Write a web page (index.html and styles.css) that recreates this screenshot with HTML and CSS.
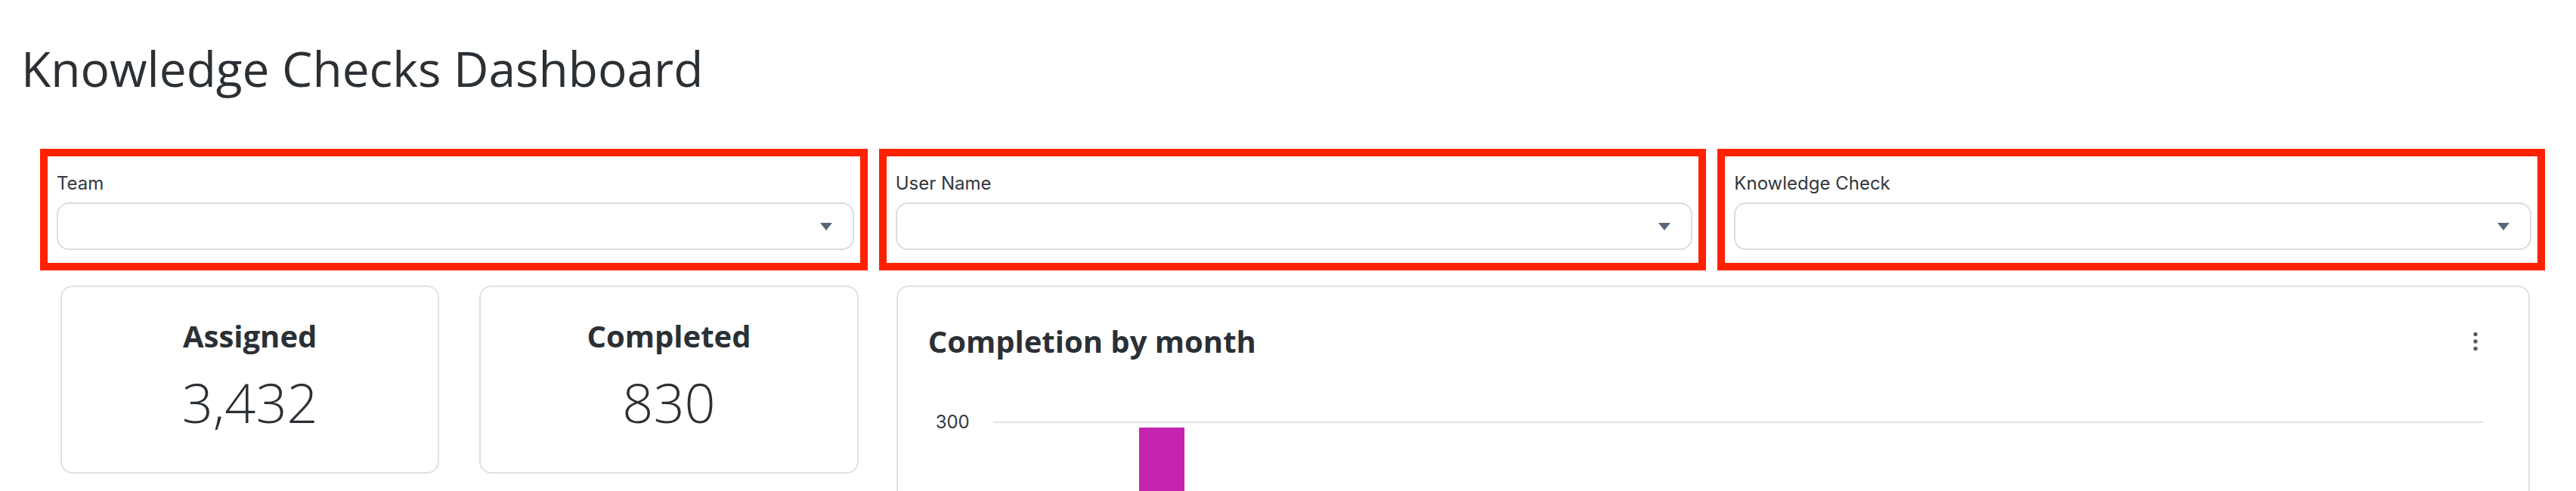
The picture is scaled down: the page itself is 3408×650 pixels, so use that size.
FILE: index.html
```html
<!DOCTYPE html>
<html lang="en">
<head>
<meta charset="utf-8">
<title>Knowledge Checks Dashboard</title>
<link rel="stylesheet" href="styles.css">
</head>
<body>
<main class="page">
  <h1 class="page-title">Knowledge Checks Dashboard</h1>

  <section class="filters">
    <div class="filter">
      <label class="filter-label">Team</label>
      <div class="select"><span class="caret"></span></div>
    </div>
    <div class="filter">
      <label class="filter-label">User Name</label>
      <div class="select"><span class="caret"></span></div>
    </div>
    <div class="filter">
      <label class="filter-label">Knowledge Check</label>
      <div class="select"><span class="caret"></span></div>
    </div>
  </section>

  <section class="panels">
    <div class="stat-group">
      <div class="stat">
        <h2 class="stat-label">Assigned</h2>
        <div class="stat-value">3,432</div>
      </div>
      <div class="stat">
        <h2 class="stat-label">Completed</h2>
        <div class="stat-value">830</div>
      </div>
    </div>

    <div class="chart-card">
      <div class="chart-head">
        <h2 class="chart-title">Completion by month</h2>
        <svg class="kebab" width="10" height="28" viewBox="0 0 10 28" aria-hidden="true">
          <circle cx="5" cy="4.5" r="2.7"/>
          <circle cx="5" cy="14" r="2.7"/>
          <circle cx="5" cy="23.5" r="2.7"/>
        </svg>
      </div>
      <div class="chart-body">
        <div class="axis-label">300</div>
        <div class="plot">
          <div class="bar"></div>
        </div>
      </div>
    </div>
  </section>
</main>
</body>
</html>
```

FILE: styles.css
```css
html, body {
  margin: 0;
  padding: 0;
  background: #ffffff;
}

body {
  font-family: "Open Sans", "Liberation Sans", sans-serif;
  color: #2b3035;
}

.page {
  width: 3408px;
}

.page-title {
  margin: 0;
  padding: 47px 0 0 28px;
  font-size: 64px;
  font-weight: 400;
  line-height: normal;
  color: #2b3035;
}

/* Filters row */
.filters {
  display: grid;
  grid-template-columns: repeat(3, 1fr);
  column-gap: 15px;
  width: 3314px;
  margin: 63px 0 0 53px;
}

.filter {
  border: 10px solid #ff2200;
  padding: 18px 8px 17px 12px;
  display: flex;
  flex-direction: column;
}

.filter-label {
  font-family: Inter, "Noto Sans", sans-serif;
  font-size: 24px;
  line-height: 36px;
  color: #33383d;
  margin-bottom: 7px;
}

.select {
  box-sizing: border-box;
  height: 63px;
  border: 2px solid #d8dde2;
  border-radius: 16px;
  display: flex;
  align-items: center;
  justify-content: flex-end;
  padding-right: 27px;
}

.caret {
  width: 0;
  height: 0;
  border-left: 8px solid transparent;
  border-right: 8px solid transparent;
  border-top: 10px solid #56677a;
}

/* Panels */
.panels {
  display: grid;
  grid-template-columns: repeat(3, 1fr);
  column-gap: 50px;
  width: 3267px;
  margin: 20px 0 0 80px;
  align-items: start;
}

.stat-group {
  grid-column: 1;
  display: grid;
  grid-template-columns: 1fr 1fr;
  column-gap: 53px;
}

.stat {
  box-sizing: border-box;
  height: 249px;
  border: 2px solid #dee2e6;
  border-radius: 16px;
  padding-top: 37px;
  text-align: center;
}

.stat-label {
  margin: 0;
  font-size: 40px;
  font-weight: 700;
  line-height: normal;
  color: #2b3035;
}

.stat-value {
  margin-top: 11px;
  font-size: 72px;
  font-weight: 300;
  line-height: normal;
  color: #2b3035;
}

.chart-card {
  grid-column: 2 / span 2;
  border: 2px solid #dee2e6;
  border-radius: 16px;
  padding: 44px 40px 0 40px;
}

.chart-head {
  display: flex;
  align-items: center;
  justify-content: space-between;
}

.chart-title {
  margin: 0;
  font-size: 40px;
  font-weight: 700;
  line-height: normal;
  color: #2b3035;
}

.kebab {
  fill: #5a5f66;
  margin-right: 25px;
}

.chart-body {
  display: flex;
  align-items: flex-start;
  margin-top: 68px;
}

.axis-label {
  font-family: Inter, "Noto Sans", sans-serif;
  font-size: 24px;
  line-height: 24px;
  color: #33383d;
  width: 44px;
  padding-left: 10px;
  margin-right: 32px;
}

.plot {
  flex: 1;
  margin-top: 11px;
  margin-right: 20px;
  border-top: 2px solid #e2e2e2;
  padding-top: 6px;
  padding-left: 193px;
}

.bar {
  width: 60px;
  height: 320px;
  background: #c424ae;
}
```
